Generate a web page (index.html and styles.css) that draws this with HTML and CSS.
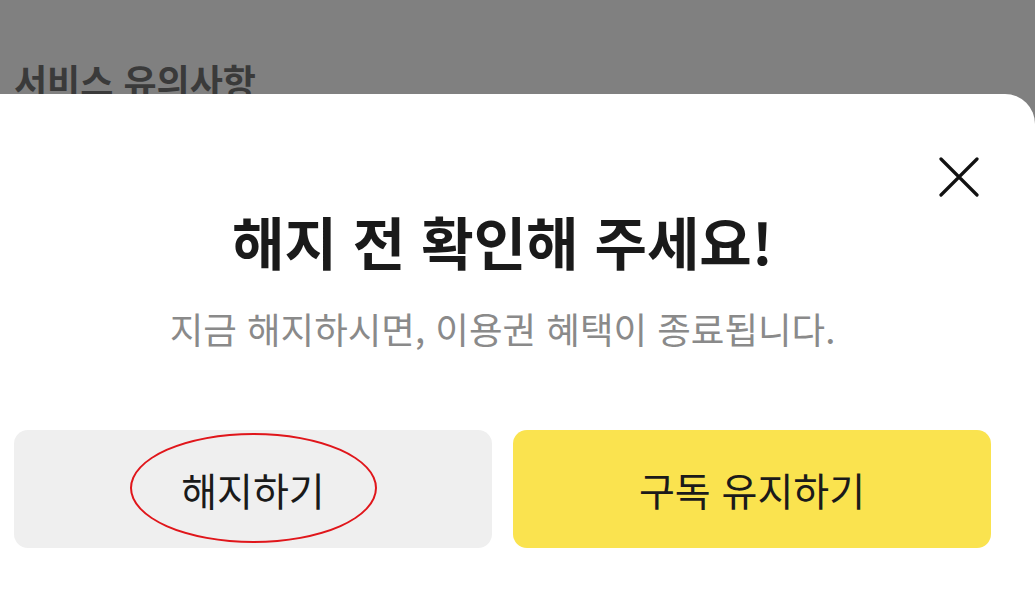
FILE: index.html
```html
<!DOCTYPE html>
<html lang="ko">
<head>
    <meta charset="UTF-8">
    <meta name="viewport" content="width=device-width, initial-scale=1.0">
    <title>구독 해지</title>
    <link rel="stylesheet" href="styles.css">
</head>
<body>
    <div class="backdrop">
        <h2 class="page-title">서비스 유의사항</h2>
    </div>

    <div class="sheet">
        <div class="sheet-top">
            <button class="close-btn" aria-label="닫기">
                <svg width="40" height="40" viewBox="0 0 40 40">
                    <path d="M2 2 L38 38 M38 2 L2 38" stroke="#111" stroke-width="3.2" stroke-linecap="round" fill="none"/>
                </svg>
            </button>
        </div>

        <h1 class="sheet-title">해지 전 확인해 주세요!</h1>
        <p class="sheet-desc">지금 해지하시면, 이용권 혜택이 종료됩니다.</p>

        <div class="actions">
            <button class="btn btn-cancel">
                해지하기
                <span class="mark"></span>
            </button>
            <button class="btn btn-keep">구독 유지하기</button>
        </div>
    </div>
</body>
</html>
```

FILE: styles.css
```css
body {
    margin: 0;
    padding: 0;
    height: 592px;
    overflow: hidden;
    background-color: #808080;
    font-family: "Noto Sans CJK KR", "Noto Sans", sans-serif;
}
.backdrop {
    height: 94px;
    padding-left: 14px;
    overflow: hidden;
}
.page-title {
    margin: 0;
    padding-top: 58px;
    font-size: 36px;
    font-weight: 700;
    line-height: 44px;
    color: #3a3a3a;
}
.sheet {
    background-color: #fff;
    border-radius: 0 30px 0 0;
    height: 498px;
    padding: 0 44px 0 14px;
}
.sheet-top {
    display: flex;
    justify-content: flex-end;
    padding-top: 63px;
    margin-right: 12px;
}
.close-btn {
    border: none;
    background: none;
    padding: 0;
    width: 40px;
    height: 40px;
    cursor: pointer;
}
.close-btn svg {
    display: block;
}
.sheet-title {
    margin: 7px 0 0;
    text-align: center;
    font-size: 57px;
    font-weight: 700;
    line-height: 72px;
    color: #1a1a1a;
}
.sheet-desc {
    margin: 30px 0 0;
    text-align: center;
    font-size: 36.5px;
    line-height: 46px;
    color: #8a8a8a;
}
.actions {
    display: flex;
    gap: 21px;
    margin-top: 78px;
}
.btn {
    position: relative;
    flex: 1;
    height: 118px;
    border: none;
    border-radius: 14px;
    font-family: inherit;
    font-size: 39px;
    color: #1a1a1a;
    cursor: pointer;
}
.btn-cancel {
    background-color: #efefef;
}
.btn-keep {
    background-color: #fae34f;
}
.mark {
    position: absolute;
    left: 116px;
    top: 3px;
    width: 243px;
    height: 106px;
    border: 2px solid #e0161b;
    border-radius: 50%;
}
```
